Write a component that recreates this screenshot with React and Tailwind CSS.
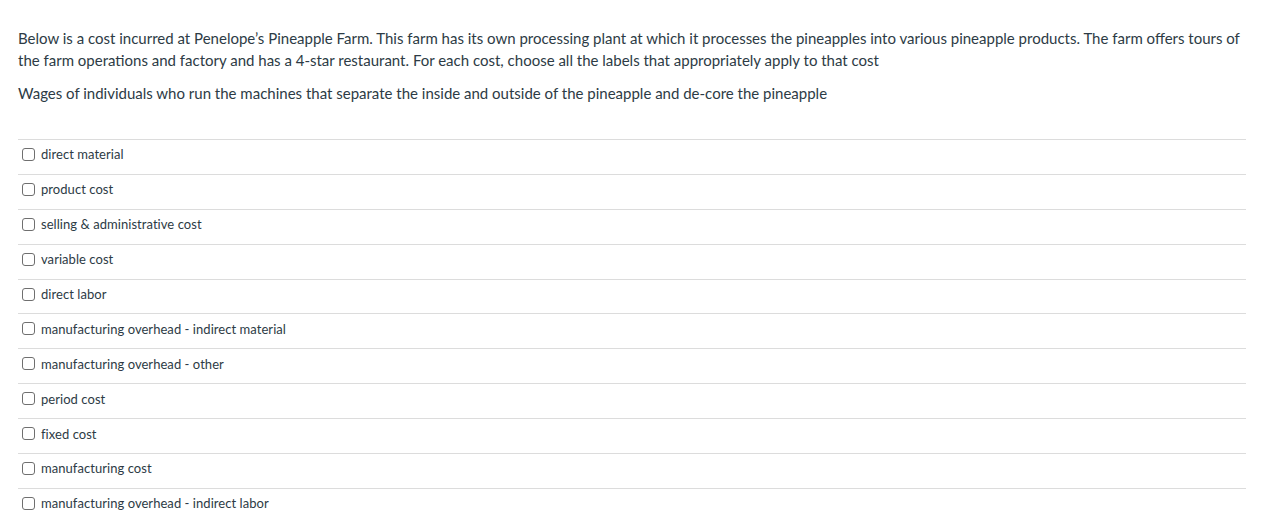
export default function App() {
  const items = [
    "direct material",
    "product cost",
    "selling & administrative cost",
    "variable cost",
    "direct labor",
    "manufacturing overhead - indirect material",
    "manufacturing overhead - other",
    "period cost",
    "fixed cost",
    "manufacturing cost",
    "manufacturing overhead - indirect labor",
  ];
  return (
    <div className="w-[1262px] h-[532px] overflow-hidden bg-white text-[#2d3b45]" style={{ fontFamily: "Lato, 'Noto Sans', sans-serif" }}>
      <div className="pl-[18px] pr-[16px] pt-[27px]">
        <p className="text-[15px] leading-[22px]">
          Below is a cost incurred at Penelope’s Pineapple Farm. This farm has its own processing plant at which it processes the pineapples into various pineapple products. The farm offers tours of the farm operations and factory and has a 4-star restaurant. For each cost, choose all the labels that appropriately apply to that cost
        </p>
        <p className="text-[15px] leading-[22px] mt-[11px]">
          Wages of individuals who run the machines that separate the inside and outside of the pineapple and de-core the pineapple
        </p>
        <div className="mt-[35px]">
          {items.map((it) => (
            <label key={it} className="flex items-center h-[34.9px] border-t border-[#dcdcdc] pl-[4px] pb-[5px]">
              <span className="w-[13px] h-[13px] border border-[#6f6f6f] rounded-[3px] bg-white shrink-0" />
              <span className="ml-[6px] text-[13px] leading-[16px] tracking-[0.05px]">{it}</span>
            </label>
          ))}
        </div>
      </div>
    </div>
  );
}
